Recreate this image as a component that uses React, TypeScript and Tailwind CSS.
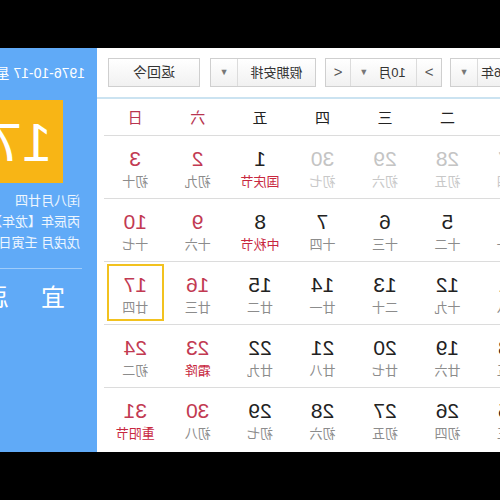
import React from "react";

// Calendar widget, drawn unflipped and then mirrored as a whole
const WEEK = ["一", "二", "三", "四", "五", "六", "日"];

type Cell = { d: number; l: string; other?: boolean; fest?: boolean; today?: boolean };

const ROWS: Cell[][] = [
  [
    { d: 27, l: "初四", other: true },
    { d: 28, l: "初五", other: true },
    { d: 29, l: "初六", other: true },
    { d: 30, l: "初七", other: true },
    { d: 1, l: "国庆节", fest: true },
    { d: 2, l: "初九" },
    { d: 3, l: "初十" },
  ],
  [
    { d: 4, l: "十一" },
    { d: 5, l: "十二" },
    { d: 6, l: "十三" },
    { d: 7, l: "十四" },
    { d: 8, l: "中秋节", fest: true },
    { d: 9, l: "十六" },
    { d: 10, l: "十七" },
  ],
  [
    { d: 11, l: "十八" },
    { d: 12, l: "十九" },
    { d: 13, l: "二十" },
    { d: 14, l: "廿一" },
    { d: 15, l: "廿二" },
    { d: 16, l: "廿三" },
    { d: 17, l: "廿四", today: true },
  ],
  [
    { d: 18, l: "廿五" },
    { d: 19, l: "廿六" },
    { d: 20, l: "廿七" },
    { d: 21, l: "廿八" },
    { d: 22, l: "廿九" },
    { d: 23, l: "霜降", fest: true },
    { d: 24, l: "初二" },
  ],
  [
    { d: 25, l: "初三" },
    { d: 26, l: "初四" },
    { d: 27, l: "初五" },
    { d: 28, l: "初六" },
    { d: 29, l: "初七" },
    { d: 30, l: "初八" },
    { d: 31, l: "重阳节", fest: true },
  ],
];

function Caret() {
  return <span className="text-[9px] text-[#777]">▼</span>;
}

function DayCell({ c, col }: { c: Cell; col: number }) {
  const weekend = col >= 5;
  const numColor = c.other ? "text-[#c4c4c4]" : weekend ? "text-[#c23a52]" : "text-[#222]";
  const lunarColor = c.fest
    ? "text-[#c8283f]"
    : c.other
    ? "text-[#c8c8c8]"
    : "text-[#8c8c8c]";
  return (
    <div className="flex justify-center">
      <div
        className={`w-[57px] h-[57px] mt-[2px] border-2 flex flex-col items-center pt-[8px] ${
          c.today ? "border-[#f2c21f]" : "border-transparent"
        }`}
      >
        <span className={`text-[21px] leading-[22px] ${numColor}`}>{c.d}</span>
        <span className={`text-[13px] leading-[16px] mt-[4px] ${lunarColor}`}>{c.l}</span>
      </div>
    </div>
  );
}

export default function App() {
  return (
    <div className="w-[500px] h-[500px] bg-black overflow-hidden flex flex-col -scale-x-100 font-['Liberation_Sans','Noto_Sans_CJK_SC',sans-serif]">
      <div className="h-[48px] shrink-0" />
      <div className="h-[404px] flex overflow-hidden shrink-0">
        {/* calendar grid */}
        <div className="w-[403px] shrink-0 bg-white overflow-hidden">
          <div className="h-[49px] pt-[10px] flex items-start ml-[-40px] text-[13px] text-[#333]">
            <div className="w-[90px] h-[29px] shrink-0 flex border border-[#cfcfcf] bg-gradient-to-b from-white to-[#f1f1f1]">
              <div className="flex-1 flex items-center justify-end pr-[3px]">1976年</div>
              <div className="w-[27px] border-l border-[#dcdcdc] flex items-center justify-center">
                <Caret />
              </div>
            </div>
            <div className="w-[117px] h-[29px] shrink-0 ml-[8px] flex border border-[#cfcfcf] bg-gradient-to-b from-white to-[#f1f1f1]">
              <div className="w-[25px] border-r border-[#dcdcdc] flex items-center justify-center text-[15px] text-[#555]">
                &gt;
              </div>
              <div className="flex-1 flex items-center justify-center gap-[10px] pl-[2px]">
                <span>10月</span>
                <Caret />
              </div>
              <div className="w-[25px] border-l border-[#dcdcdc] flex items-center justify-center text-[15px] text-[#555]">
                &lt;
              </div>
            </div>
            <div className="w-[106px] h-[29px] shrink-0 ml-[9px] flex border border-[#cfcfcf] bg-gradient-to-b from-white to-[#f1f1f1]">
              <div className="flex-1 flex items-center justify-center">假期安排</div>
              <div className="w-[27px] border-l border-[#dcdcdc] flex items-center justify-center">
                <Caret />
              </div>
            </div>
            <div className="w-[92px] h-[29px] shrink-0 ml-[10px] flex items-center justify-center border border-[#cfcfcf] bg-gradient-to-b from-white to-[#f1f1f1] text-[14px]">
              返回今
            </div>
          </div>
          <div className="h-[2px] bg-[#cbe3f1]" />
          <div className="w-[437px] ml-[-41px]">
            <div className="grid grid-cols-7 h-[36px] items-center text-[15px]">
              {WEEK.map((w, i) => (
                <div key={w} className={`text-center pt-[2px] ${i >= 5 ? "text-[#b8354f]" : "text-[#222]"}`}>
                  {w}
                </div>
              ))}
            </div>
            {ROWS.map((row, r) => (
              <div key={r} className="grid grid-cols-7 h-[63px] border-t border-[#dcdcdc]">
                {row.map((c, i) => (
                  <DayCell key={i} c={c} col={i} />
                ))}
              </div>
            ))}
          </div>
        </div>

        {/* side panel */}
        <div className="flex-1 bg-[#60aaf7] overflow-hidden">
          <div className="w-[240px] pl-[12px] pt-[15px] text-white">
            <div className="text-[14px] leading-[20px] whitespace-nowrap">1976-10-17 星期日</div>
            <div className="ml-[22px] mt-[17px] w-[86px] h-[83px] bg-[#f8b515] flex items-center pl-[11px]">
              <span className="text-[54px] leading-none">17</span>
            </div>
            <div className="ml-[5px] mt-[7px] text-[13px] leading-[21px] text-white/90 whitespace-nowrap">
              <div>闰八月廿四</div>
              <div>丙辰年【龙年】</div>
              <div>戊戌月 壬寅日</div>
            </div>
            <div className="ml-[3px] mt-[15px] h-px w-[200px] bg-white/40" />
            <div className="ml-[20px] mt-[16px] flex gap-[32px] text-[24px] leading-[26px]">
              <span>宜</span>
              <span>忌</span>
            </div>
          </div>
        </div>
      </div>
    </div>
  );
}
